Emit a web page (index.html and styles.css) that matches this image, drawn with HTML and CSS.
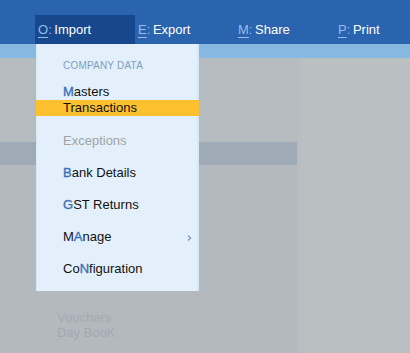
FILE: index.html
```html
<!DOCTYPE html>
<html>
<head>
<meta charset="utf-8">
<link rel="stylesheet" href="styles.css">
</head>
<body>
<div class="app">
  <header class="menubar">
    <div class="top-item active"><span class="key">O</span><span class="colon">:</span> Import</div>
    <div class="top-item"><span class="key">E</span><span class="colon">:</span> Export</div>
    <div class="top-item"><span class="key">M</span><span class="colon">:</span> Share</div>
    <div class="top-item"><span class="key">P</span><span class="colon">:</span> Print</div>
  </header>
  <div class="strip"></div>
  <main class="workspace">
    <section class="panel">
      <div class="panel-top"></div>
      <div class="panel-head"></div>
      <div class="panel-body">
        <div class="faint">Vouchers</div>
        <div class="faint">Day BooK</div>
      </div>
    </section>
    <aside class="side"></aside>
  </main>

  <nav class="dropdown">
    <div class="heading">COMPANY DATA</div>
    <div class="item first"><b class="hk">M</b>asters</div>
    <div class="item selected">Transactions</div>
    <div class="item disabled gap17">Exceptions</div>
    <div class="item gap"><b class="hk">B</b>ank Details</div>
    <div class="item gap"><b class="hk">G</b>ST Returns</div>
    <div class="item gap">M<b class="hk">A</b>nage
      <svg class="chev" width="5" height="6" viewBox="0 0 5 6"><path d="M1 0.5 L3.6 3 L1 5.5" fill="none" stroke="#7f97b8" stroke-width="1.3"/></svg>
    </div>
    <div class="item gap">Co<b class="hk">N</b>figuration</div>
  </nav>
</div>
</body>
</html>
```

FILE: styles.css
```css
html, body {
  margin: 0;
  padding: 0;
}
body {
  width: 410px;
  height: 353px;
  overflow: hidden;
  font-family: "Liberation Sans", Arial, sans-serif;
  font-size: 13px;
}
.app {
  position: relative;
  width: 410px;
  height: 353px;
  display: flex;
  flex-direction: column;
}
.menubar {
  height: 44px;
  background: #2a63ae;
  display: flex;
  align-items: flex-end;
  padding-left: 35px;
  box-sizing: border-box;
  overflow: hidden;
}
.top-item {
  flex: 0 0 100px;
  width: 100px;
  height: 29px;
  box-sizing: border-box;
  padding-left: 3px;
  padding-top: 7px;
  line-height: 16px;
  color: #ffffff;
  white-space: nowrap;
  word-spacing: -1px;
}
.top-item.active {
  background: #17478d;
}
.top-item .key {
  color: #93bdec;
  text-decoration: underline;
  text-underline-offset: 3px;
  text-decoration-thickness: 1px;
}
.top-item .colon {
  color: #93bdec;
}
.strip {
  height: 14px;
  background: #86b8e2;
}
.workspace {
  flex: 1;
  display: flex;
}
.panel {
  width: 297px;
  border-right: 3px solid #b8bdc1;
  display: flex;
  flex-direction: column;
}
.panel-top {
  height: 84px;
  background: #b6bbbf;
}
.panel-head {
  height: 23px;
  background: #9eaab5;
}
.panel-body {
  flex: 1;
  background: #b3b9be;
  padding-top: 145px;
  padding-left: 57px;
}
.faint {
  line-height: 15px;
  color: #a3a9b0;
}
.side {
  flex: 1;
  background: #babfc2;
}
.dropdown {
  position: absolute;
  left: 36px;
  top: 44px;
  width: 163px;
  height: 247px;
  box-sizing: border-box;
  background: #e3f0fb;
  border-right: 2px solid #d3eafb;
  border-left: 1px solid #d6e8f6;
  padding-top: 16px;
}
.heading {
  padding-left: 26px;
  font-size: 10px;
  line-height: 12px;
  letter-spacing: 0.2px;
  color: #7f9dbf;
}
.item {
  position: relative;
  height: 16px;
  line-height: 16px;
  padding-left: 26px;
  color: #111111;
  white-space: nowrap;
}
.item.first {
  margin-top: 12px;
}
.item.selected {
  background: #fdc02f;
  margin-right: -2px;
  margin-left: -1px;
  padding-left: 27px;
}
.item.disabled {
  color: #a2a2a2;
}
.item.gap17 {
  margin-top: 17px;
}
.item.gap {
  margin-top: 16px;
}
.hk {
  font-weight: normal;
  color: #3a70b8;
  -webkit-text-stroke: 0.35px #3a70b8;
}
.chev {
  position: absolute;
  left: 150px;
  top: 6px;
}
```
